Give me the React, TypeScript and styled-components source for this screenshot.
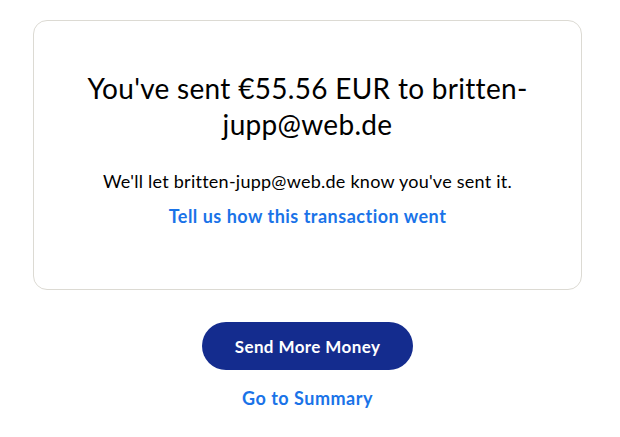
import React from 'react';
import styled, { createGlobalStyle } from 'styled-components';

const GlobalStyle = createGlobalStyle`
  body {
    margin: 0;
    background: #ffffff;
    font-family: Lato, "Open Sans", sans-serif;
    color: #001435;
  }
`;

const Page = styled.div`
  width: 549px;
  margin-left: 33px;
  padding-top: 20px;
  display: flex;
  flex-direction: column;
  align-items: center;
`;

const Card = styled.div`
  box-sizing: border-box;
  width: 100%;
  height: 270px;
  border: 1px solid #dcdad3;
  border-radius: 14px;
  padding: 49px 40px 0;
  display: flex;
  flex-direction: column;
  align-items: center;
  text-align: center;
`;

const Heading = styled.h1`
  margin: 0;
  font-size: 28px;
  line-height: 36px;
  font-weight: 400;
  letter-spacing: 0.3px;
  color: #000000;
  max-width: 460px;
`;

const Message = styled.p`
  margin: 27px 0 0;
  font-size: 18px;
  line-height: 24px;
  letter-spacing: 0.25px;
  color: #000000;
`;

const TextLink = styled.a<{ $top: number }>`
  margin-top: ${(p) => p.$top}px;
  font-size: 18px;
  line-height: 24px;
  font-weight: 700;
  letter-spacing: 0.5px;
  color: #1a73e8;
  text-decoration: none;
  cursor: pointer;
`;

const PrimaryButton = styled.button`
  margin-top: 32px;
  width: 211px;
  height: 48px;
  border: none;
  border-radius: 24px;
  background: #142c8e;
  color: #ffffff;
  font-family: inherit;
  font-size: 17px;
  font-weight: 700;
  letter-spacing: 0.4px;
  cursor: pointer;
`;

export default function App() {
  return (
    <>
      <GlobalStyle />
      <Page>
        <Card>
          <Heading>You've sent €55.56 EUR to britten-jupp@web.de</Heading>
          <Message>We'll let britten-jupp@web.de know you've sent it.</Message>
          <TextLink $top={11}>Tell us how this transaction went</TextLink>
        </Card>
        <PrimaryButton>Send More Money</PrimaryButton>
        <TextLink $top={16}>Go to Summary</TextLink>
      </Page>
    </>
  );
}
